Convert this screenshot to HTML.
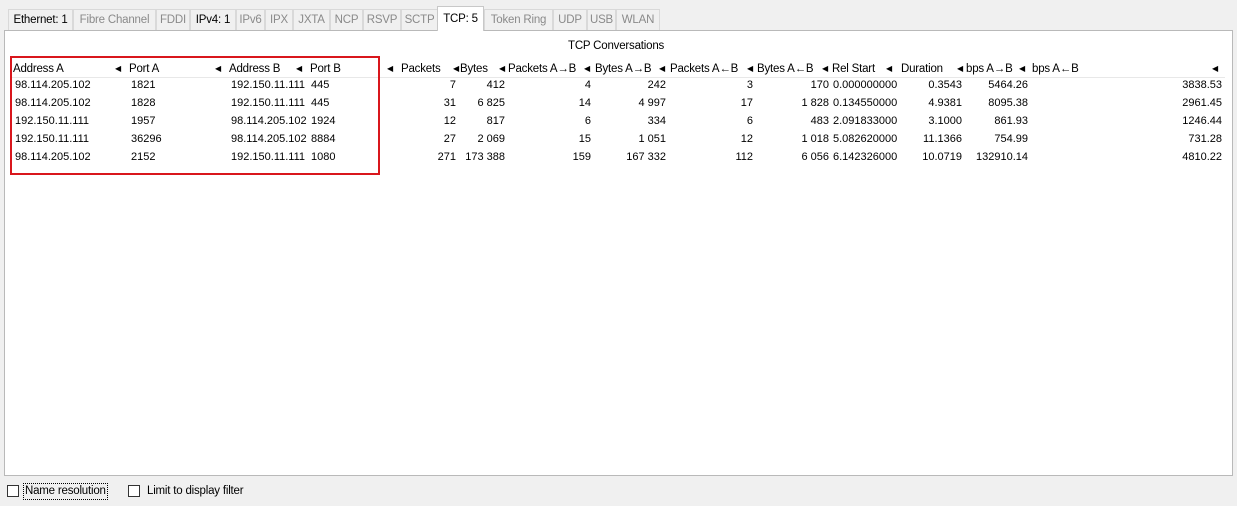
<!DOCTYPE html>
<html><head><style>
body{margin:0;width:1237px;height:506px;background:#f0f0f0;font-family:"Liberation Sans",sans-serif;font-size:11.5px;color:#000;position:relative;overflow:hidden}
.a{position:absolute;white-space:nowrap}
.tab{position:absolute;top:9px;height:21px;border:1px solid #d9d9d9;border-bottom:none;background:#f0f0f0;color:#8a8a8a;line-height:21px;text-align:center;box-sizing:border-box;letter-spacing:-0.2px}
.tab.on{color:#000}
.tab.sel{top:6px;height:25px;background:#fff;color:#000;border-color:#c8c8c8;z-index:2;line-height:24px}
.panel{position:absolute;left:4px;top:30px;width:1229px;height:446px;background:#fff;border:1px solid #b9b9b9;box-sizing:border-box}
.h{position:absolute;top:61px;height:16px;line-height:16px;letter-spacing:-0.2px}
.ar{position:absolute;top:61px;font-size:8px;line-height:16px}
.r{position:absolute;text-align:right;white-space:nowrap;font-size:11px}
.d{position:absolute;white-space:nowrap;font-size:11px}
.cb{position:absolute;top:485px;width:12px;height:12px;border:1px solid #333;background:#fff;box-sizing:border-box}
</style></head><body>
<div class="panel"></div>
<div class="tab on" style="left:8px;width:65px">Ethernet: 1</div>
<div class="tab" style="left:73px;width:83px">Fibre Channel</div>
<div class="tab" style="left:156px;width:34px">FDDI</div>
<div class="tab on" style="left:190px;width:46px">IPv4: 1</div>
<div class="tab" style="left:236px;width:29px">IPv6</div>
<div class="tab" style="left:265px;width:28px">IPX</div>
<div class="tab" style="left:293px;width:37px">JXTA</div>
<div class="tab" style="left:330px;width:33px">NCP</div>
<div class="tab" style="left:363px;width:38px">RSVP</div>
<div class="tab" style="left:401px;width:37px">SCTP</div>
<div class="tab sel" style="left:437px;width:47px">TCP: 5</div>
<div class="tab" style="left:484px;width:69px">Token Ring</div>
<div class="tab" style="left:553px;width:34px">UDP</div>
<div class="tab" style="left:587px;width:29px">USB</div>
<div class="tab" style="left:616px;width:44px">WLAN</div>
<div class="a" style="left:568px;top:40px;letter-spacing:-0.2px">TCP Conversations</div>
<div class="a" style="left:12px;top:60px;width:1213px;height:17px;background:#fff;border-bottom:1px solid #e8e8e8"></div>
<div class="h" style="left:13px">Address A</div><div class="ar" style="left:115px">◀</div>
<div class="h" style="left:129px">Port A</div><div class="ar" style="left:215px">◀</div>
<div class="h" style="left:229px">Address B</div><div class="ar" style="left:296px">◀</div>
<div class="h" style="left:310px">Port B</div><div class="ar" style="left:387px">◀</div>
<div class="h" style="left:401px">Packets</div><div class="ar" style="left:453px">◀</div>
<div class="h" style="left:460px">Bytes</div><div class="ar" style="left:499px">◀</div>
<div class="h" style="left:508px">Packets A→B</div><div class="ar" style="left:584px">◀</div>
<div class="h" style="left:595px">Bytes A→B</div><div class="ar" style="left:659px">◀</div>
<div class="h" style="left:670px">Packets A←B</div><div class="ar" style="left:747px">◀</div>
<div class="h" style="left:757px">Bytes A←B</div><div class="ar" style="left:822px">◀</div>
<div class="h" style="left:832px">Rel Start</div><div class="ar" style="left:886px">◀</div>
<div class="h" style="left:901px">Duration</div><div class="ar" style="left:957px">◀</div>
<div class="h" style="left:966px">bps A→B</div><div class="ar" style="left:1019px">◀</div>
<div class="h" style="left:1032px">bps A←B</div><div class="ar" style="left:1212px">◀</div>
<div id="rows"></div>
<div class="a" style="left:10px;top:56px;width:366px;height:115px;border:2px solid #d9161c"></div>
<div class="cb" style="left:7px"></div>
<div class="a" style="left:23px;top:483px;border:1px dotted #000;padding:0 1px;line-height:15px;letter-spacing:-0.2px">Name resolution</div>
<div class="cb" style="left:128px"></div>
<div class="a" style="left:147px;top:484px;line-height:15px;letter-spacing:-0.2px">Limit to display filter</div>
<script>
var d=[["98.114.205.102","1821","192.150.11.111","445","7","412","4","242","3","170","0.000000000","0.3543","5464.26","3838.53"],
["98.114.205.102","1828","192.150.11.111","445","31","6 825","14","4 997","17","1 828","0.134550000","4.9381","8095.38","2961.45"],
["192.150.11.111","1957","98.114.205.102","1924","12","817","6","334","6","483","2.091833000","3.1000","861.93","1246.44"],
["192.150.11.111","36296","98.114.205.102","8884","27","2 069","15","1 051","12","1 018","5.082620000","11.1366","754.99","731.28"],
["98.114.205.102","2152","192.150.11.111","1080","271","173 388","159","167 332","112","6 056","6.142326000","10.0719","132910.14","4810.22"]];
var L=[15,131,231,311],R=[456,505,591,666,753,829],R2=[962,1028,1222];var h="";
d.forEach(function(r,i){var t=79+i*18;
for(var j=0;j<4;j++)h+='<div class="d" style="left:'+L[j]+'px;top:'+t+'px">'+r[j]+'</div>';
for(j=0;j<6;j++)h+='<div class="r" style="right:'+(1237-R[j])+'px;top:'+t+'px">'+r[4+j]+'</div>';
h+='<div class="d" style="left:833px;top:'+t+'px">'+r[10]+'</div>';
for(j=0;j<3;j++)h+='<div class="r" style="right:'+(1237-R2[j])+'px;top:'+t+'px">'+r[11+j]+'</div>';});
document.getElementById("rows").innerHTML=h;
</script>
</body></html>
